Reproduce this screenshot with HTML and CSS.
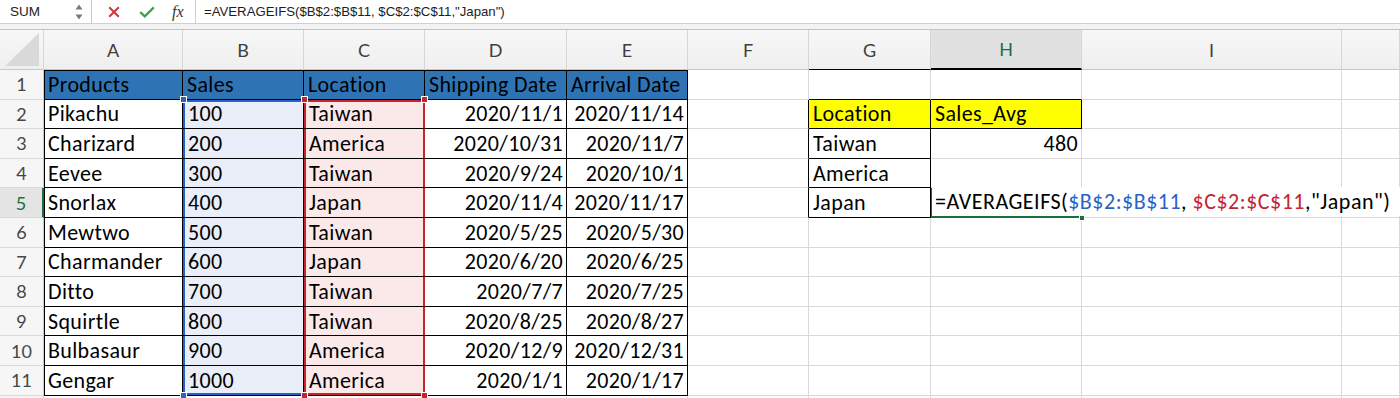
FILE: index.html
```html
<!DOCTYPE html>
<html>
<head>
<meta charset="utf-8">
<link rel="stylesheet" href="styles.css">
</head>
<body>
<div class="fbar">
  <div class="namebox">
    <span class="nb-text">SUM</span>
    <svg class="nb-arrows" width="8" height="18" viewBox="0 0 8 18"><path d="M4 1.5L7.5 6.5H0.5Z M4 16.5L7.5 11.5H0.5Z" fill="#7a7a7a"/></svg>
  </div>
  <div class="fb-icons">
    <svg class="ic-x" width="12" height="12" viewBox="0 0 12 12"><path d="M1.2 1.2L10.8 10.8M10.8 1.2L1.2 10.8" stroke="#d8363e" stroke-width="2.1" fill="none"/></svg>
    <svg class="ic-ok" width="16" height="12" viewBox="0 0 16 12"><path d="M1.2 6.2L5.8 10.4L14.8 1.4" stroke="#3ea24c" stroke-width="2.3" fill="none"/></svg>
    <span class="ic-fx">fx</span>
  </div>
  <div class="fb-formula">=AVERAGEIFS($B$2:$B$11, $C$2:$C$11,"Japan")</div>
</div>
<div class="gap"></div>
<div class="sheet">
  <!-- column headers -->
  <div class="ch corner"><svg width="34" height="33" viewBox="0 0 34 33"><path d="M34 0V33H0Z" fill="#d9d9d9"/></svg></div>
  <div class="ch">A</div><div class="ch">B</div><div class="ch">C</div><div class="ch">D</div><div class="ch">E</div><div class="ch">F</div><div class="ch mb-b">G</div><div class="ch hsel mb-b">H</div><div class="ch">I</div><div class="ch"></div>

  <!-- row 1 -->
  <div class="rh">1</div>
  <div class="c tb hd a1">Products</div><div class="c tb hd top rb-top">Sales</div><div class="c tb hd top rc-top">Location</div><div class="c tb hd top">Shipping Date</div><div class="c tb hd top">Arrival Date</div>
  <div class="c"></div><div class="c mb-b"></div><div class="c mb-b"></div><div class="c"></div><div class="c"></div>

  <!-- row 2 -->
  <div class="rh">2</div>
  <div class="c tb left">Pikachu</div>
  <div class="c tb rb first"><span class="hd-sq blue tl"></span>100</div>
  <div class="c tb rc first"><span class="hd-sq red tl"></span><span class="hd-sq red tr"></span>Taiwan</div>
  <div class="c tb r">2020/11/1</div><div class="c tb r">2020/11/14</div>
  <div class="c mb-r"></div><div class="c mb y">Location</div><div class="c mb y">Sales_Avg</div><div class="c"></div><div class="c"></div>

  <!-- row 3 -->
  <div class="rh">3</div>
  <div class="c tb left">Charizard</div><div class="c tb rb">200</div><div class="c tb rc">America</div>
  <div class="c tb r">2020/10/31</div><div class="c tb r">2020/11/7</div>
  <div class="c mb-r"></div><div class="c mb">Taiwan</div><div class="c r">480</div><div class="c"></div><div class="c"></div>

  <!-- row 4 -->
  <div class="rh">4</div>
  <div class="c tb left">Eevee</div><div class="c tb rb">300</div><div class="c tb rc">Taiwan</div>
  <div class="c tb r">2020/9/24</div><div class="c tb r">2020/10/1</div>
  <div class="c mb-r"></div><div class="c mb">America</div><div class="c"></div><div class="c"></div><div class="c"></div>

  <!-- row 5 -->
  <div class="rh rsel">5</div>
  <div class="c tb left">Snorlax</div><div class="c tb rb">400</div><div class="c tb rc">Japan</div>
  <div class="c tb r">2020/11/4</div><div class="c tb r">2020/11/17</div>
  <div class="c mb-r"></div><div class="c mb">Japan</div>
  <div class="c edit"><span class="editbox">=AVERAGEIFS(<span class="ref-b">$B$2:$B$11</span>, <span class="ref-c">$C$2:$C$11</span>,"Japan")</span><span class="fill-sq"></span></div>
  <div class="c"></div><div class="c"></div>

  <!-- row 6 -->
  <div class="rh">6</div>
  <div class="c tb left">Mewtwo</div><div class="c tb rb">500</div><div class="c tb rc">Taiwan</div>
  <div class="c tb r">2020/5/25</div><div class="c tb r">2020/5/30</div>
  <div class="c"></div><div class="c"></div><div class="c"></div><div class="c"></div><div class="c"></div>

  <!-- row 7 -->
  <div class="rh">7</div>
  <div class="c tb left">Charmander</div><div class="c tb rb">600</div><div class="c tb rc">Japan</div>
  <div class="c tb r">2020/6/20</div><div class="c tb r">2020/6/25</div>
  <div class="c"></div><div class="c"></div><div class="c"></div><div class="c"></div><div class="c"></div>

  <!-- row 8 -->
  <div class="rh">8</div>
  <div class="c tb left">Ditto</div><div class="c tb rb">700</div><div class="c tb rc">Taiwan</div>
  <div class="c tb r">2020/7/7</div><div class="c tb r">2020/7/25</div>
  <div class="c"></div><div class="c"></div><div class="c"></div><div class="c"></div><div class="c"></div>

  <!-- row 9 -->
  <div class="rh">9</div>
  <div class="c tb left">Squirtle</div><div class="c tb rb">800</div><div class="c tb rc">Taiwan</div>
  <div class="c tb r">2020/8/25</div><div class="c tb r">2020/8/27</div>
  <div class="c"></div><div class="c"></div><div class="c"></div><div class="c"></div><div class="c"></div>

  <!-- row 10 -->
  <div class="rh">10</div>
  <div class="c tb left">Bulbasaur</div><div class="c tb rb">900</div><div class="c tb rc">America</div>
  <div class="c tb r">2020/12/9</div><div class="c tb r">2020/12/31</div>
  <div class="c"></div><div class="c"></div><div class="c"></div><div class="c"></div><div class="c"></div>

  <!-- row 11 -->
  <div class="rh">11</div>
  <div class="c tb left">Gengar</div>
  <div class="c tb rb last"><span class="hd-sq blue bl"></span>1000</div>
  <div class="c tb rc last"><span class="hd-sq red bl"></span><span class="hd-sq red br"></span>America</div>
  <div class="c tb r">2020/1/1</div><div class="c tb r">2020/1/17</div>
  <div class="c"></div><div class="c"></div><div class="c"></div><div class="c"></div><div class="c"></div>

  <!-- row 12 (only its top edge is in view) -->
  <div class="rh"></div>
  <div class="c"></div><div class="c"></div><div class="c"></div><div class="c"></div><div class="c"></div>
  <div class="c"></div><div class="c"></div><div class="c"></div><div class="c"></div><div class="c"></div>
</div>
</body>
</html>
```

FILE: styles.css
```css
html, body {
  margin: 0;
  padding: 0;
  overflow: hidden;
  background: #ffffff;
}

body {
  width: 1400px;
  height: 398px;
}

/* ---------- formula bar ---------- */
.fbar {
  display: flex;
  height: 23px;
  border-bottom: 1px solid #cfcfcf;
  background: #ffffff;
  font-family: "Liberation Sans", Arial, sans-serif;
  font-size: 13px;
  color: #1d1d1d;
}

.namebox {
  width: 92px;
  display: flex;
  align-items: center;
  justify-content: space-between;
  padding: 0 8px 0 10px;
  box-sizing: border-box;
  border-right: 1px solid #c9c9c9;
}

.nb-text {
  font-size: 13.5px;
}

.nb-arrows {
  display: block;
}

.fb-icons {
  width: 104px;
  display: flex;
  align-items: center;
  padding-left: 16px;
  box-sizing: border-box;
  border-right: 1px solid #d0d0d0;
}

.ic-x {
  display: block;
}

.ic-ok {
  display: block;
  margin-left: 19px;
}

.ic-fx {
  margin-left: 17px;
  font-family: "Liberation Serif", "Times New Roman", serif;
  font-style: italic;
  font-size: 16px;
  color: #333333;
  line-height: 1;
}

.fb-formula {
  display: flex;
  align-items: center;
  padding-left: 8px;
  white-space: pre;
  font-size: 13.2px;
}

.gap {
  height: 5px;
  background: #f3f3f3;
  border-bottom: 1px solid #c4c4c4;
}

/* ---------- sheet grid ---------- */
.sheet {
  display: grid;
  grid-template-columns: 44px 139px 121px 121px 142px 121px 121px 122px 151px 260px 58px;
  grid-template-rows: 40px repeat(12, 29.6px);
  font-family: Carlito, Lato, "Liberation Sans", sans-serif;
}

.ch {
  background: linear-gradient(#f7f7f7, #efefef);
  border-right: 1px solid #d6d6d6;
  border-bottom: 1px solid #c8c8c8;
  box-sizing: border-box;
  display: flex;
  align-items: center;
  justify-content: center;
  font-family: Lato, "Liberation Sans", sans-serif;
  font-size: 18px;
  color: #3e3e3e;
}

.corner {
  align-items: flex-end;
  justify-content: flex-end;
  padding: 0 4px 3px 0;
}

.corner svg {
  display: block;
}

.hsel {
  background: #e1e1e1;
  color: #1e6e3d;
  border-bottom: 2px solid #1e6e3d;
}

.rh {
  background: #f6f6f6;
  border-right: 1px solid #cbcbcb;
  border-bottom: 1px solid #d9d9d9;
  box-sizing: border-box;
  display: flex;
  align-items: center;
  justify-content: center;
  font-family: Lato, "Liberation Sans", sans-serif;
  font-size: 18px;
  color: #474747;
}

.rsel {
  background: #e4e4e4;
  color: #1e6e3d;
  border-right: 2px solid #1e6e3d;
}

.c {
  border-right: 1px solid #d9d9d9;
  border-bottom: 1px solid #d9d9d9;
  box-sizing: border-box;
  display: flex;
  align-items: center;
  padding: 0 4px 0 4px;
  font-size: 22px;
  letter-spacing: 0.35px;
  color: #000000;
  white-space: nowrap;
  overflow: hidden;
}

.r {
  justify-content: flex-end;
  padding-right: 3px;
}

/* main table */
.tb {
  border-right-color: #000000;
  border-bottom-color: #000000;
}

.hd {
  background: #2e74b5;
}

.a1 {
  box-shadow: inset 1px 1px 0 #000000;
}

.top {
  box-shadow: inset 0 1px 0 #000000;
}

.left {
  box-shadow: inset 1px 0 0 #000000;
}

.rb-top,
.rc-top {
  border-bottom-color: #000000;
}

/* blue referenced range B2:B11 */
.rb {
  background: #e9eef8;
  box-shadow: inset 2px 0 0 #2862c9;
  padding-left: 5px;
}

.rb.first {
  box-shadow: inset 2px 2px 0 #2862c9;
  position: relative;
  overflow: visible;
}

.rb.last {
  box-shadow: inset 2px -2px 0 #2862c9;
  position: relative;
  overflow: visible;
}

/* red referenced range C2:C11 */
.rc {
  background: #fbe9ea;
  border-right-color: #c4252f;
  box-shadow: inset 2px 0 0 #c4252f, inset -1px 0 0 #c4252f;
  padding-left: 5px;
}

.rc.first {
  box-shadow: inset 2px 2px 0 #c4252f, inset -1px 0 0 #c4252f;
  position: relative;
  overflow: visible;
}

.rc.last {
  box-shadow: inset 2px -2px 0 #c4252f, inset -1px 0 0 #c4252f;
  position: relative;
  overflow: visible;
}

.hd-sq {
  position: absolute;
  width: 5px;
  height: 5px;
  border: 1px solid #ffffff;
  z-index: 4;
}

.hd-sq.blue {
  background: #2862c9;
}

.hd-sq.red {
  background: #c4252f;
}

.hd-sq.tl {
  left: -3px;
  top: -4px;
}

.hd-sq.tr {
  right: -4px;
  top: -4px;
}

.hd-sq.bl {
  left: -3px;
  bottom: -4px;
}

.hd-sq.br {
  right: -4px;
  bottom: -4px;
}

/* small lookup table */
.mb-b {
  border-bottom-color: #000000;
}

.mb-r {
  border-right-color: #000000;
}

.mb {
  border-right-color: #000000;
  border-bottom-color: #000000;
}

.y {
  background: #ffff00;
}

/* active cell in edit mode */
.edit {
  position: relative;
  overflow: visible;
  z-index: 3;
  border-bottom: 2px solid #1e6e3d;
  box-shadow: inset 1px 0 0 #1e6e3d;
  padding: 0;
}

.editbox {
  position: absolute;
  left: 1px;
  top: -1px;
  bottom: 0;
  width: 470px;
  display: block;
  line-height: 29px;
  padding-left: 3px;
  background: #ffffff;
  white-space: pre;
  letter-spacing: 0.5px;
}

.ref-b {
  color: #2862c9;
}

.ref-c {
  color: #c4252f;
}

.fill-sq {
  position: absolute;
  right: -4px;
  bottom: -5px;
  width: 6px;
  height: 6px;
  background: #1e6e3d;
  border: 1px solid #ffffff;
  box-sizing: border-box;
}
```
